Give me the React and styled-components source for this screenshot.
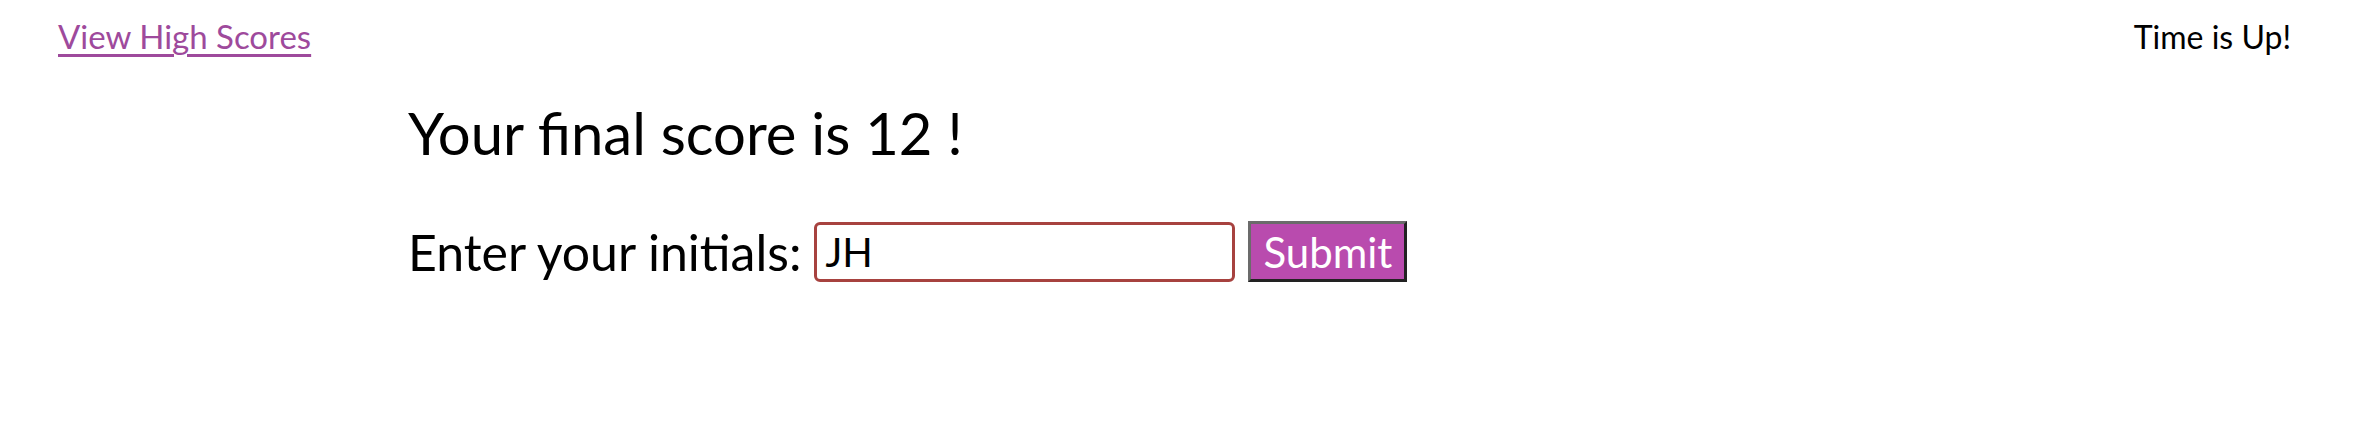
import React from 'react';
import styled, { createGlobalStyle } from 'styled-components';

const GlobalStyle = createGlobalStyle`
  body {
    margin: 0;
    background: #ffffff;
    font-family: "Lato", "Open Sans", sans-serif;
    color: #000000;
  }
`;

const Header = styled.header`
  display: flex;
  justify-content: space-between;
  align-items: center;
  padding: 8px 63px 0 58px;
  height: 56px;
`;

const ScoresLink = styled.a`
  color: #9e4a9c;
  font-size: 33px;
  text-decoration: underline;
  text-decoration-thickness: 3px;
  text-underline-offset: 5px;
`;

const Timer = styled.div`
  font-size: 32px;
`;

const Main = styled.main`
  padding: 32px 0 0 408px;
`;

const Title = styled.h1`
  margin: 0 0 51px 0;
  font-size: 58px;
  font-weight: 400;
  line-height: 74px;
`;

const Form = styled.form`
  display: flex;
  align-items: center;
  gap: 13px;
`;

const Label = styled.label`
  font-size: 50px;
`;

const Input = styled.input`
  box-sizing: border-box;
  width: 421px;
  height: 60px;
  border: 3px solid #a7423f;
  border-radius: 6px;
  padding: 0 8px;
  font-family: inherit;
  font-size: 40px;
  color: #000000;
  outline: none;
`;

const SubmitButton = styled.button`
  box-sizing: border-box;
  height: 61px;
  padding: 0 12px;
  background: #b94bae;
  color: #ffffff;
  font-family: inherit;
  font-size: 42px;
  border-style: solid;
  border-width: 3px;
  border-color: #6b6b6b #222222 #222222 #6b6b6b;
`;

export default function App() {
  return (
    <>
      <GlobalStyle />
      <Header>
        <ScoresLink href="#">View High Scores</ScoresLink>
        <Timer>Time is Up!</Timer>
      </Header>
      <Main>
        <Title>Your final score is 12 !</Title>
        <Form onSubmit={(e) => e.preventDefault()}>
          <Label htmlFor="initials">Enter your initials:</Label>
          <Input id="initials" defaultValue="JH" />
          <SubmitButton type="submit">Submit</SubmitButton>
        </Form>
      </Main>
    </>
  );
}
